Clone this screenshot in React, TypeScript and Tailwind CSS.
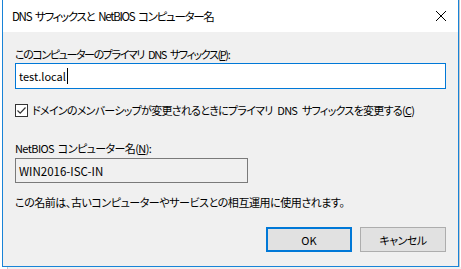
import React from 'react';

const font = "[font-family:'Noto_Sans_CJK_JP','Noto_Sans',sans-serif] [font-feature-settings:'palt']";

const App: React.FC = () => {
  return (
    <div className={`relative w-[461px] h-[269px] bg-white overflow-hidden text-[11px] text-black ${font}`}>
      {/* window behind */}
      <div className="absolute left-[459px] top-[0px] w-[2px] h-[269px] border-l border-[#c8c8c8]" />
      <div className="absolute left-[7px] top-[267px] w-[454px] h-[2px] bg-[#f0f0f0] border-l border-[#c8c8c8]" />

      <div className="relative ml-[2px] w-[457px] h-[267px] border-x border-b border-[#1883d7] bg-[#f0f0f0] flex flex-col">
        <div className="h-[32px] bg-white flex items-center justify-between pl-[9px] pr-[10px] shrink-0">
          <span className="leading-[16px] tracking-[-1.3px] [word-spacing:2.5px] text-[11.5px]">DNS サフィックスと NetBIOS コンピューター名</span>
          <svg width="12" height="12" viewBox="0 0 12 12" className="mr-[1px]">
            <path d="M1 1 L11 11 M11 1 L1 11" stroke="#000" strokeWidth="1" />
          </svg>
        </div>

        <div className="flex flex-col px-[12px]">
          <label className="mt-[14px] leading-[16px] tracking-[-1.4px] [word-spacing:3px]">
            このコンピューターのプライマリ DNS サフィックス(<span className="underline">P</span>):
          </label>
          <div className="mt-[1px] h-[26px] bg-white border border-[#0078d7] flex items-center pl-[3px]">
            <span className="leading-[16px]">test.local</span>
            <span className="ml-[1px] w-[1px] h-[16px] bg-black" />
          </div>

          <div className="mt-[13px] flex items-center h-[16px]">
            <span className="w-[13px] h-[13px] border border-[#333] bg-white flex items-center justify-center shrink-0">
              <svg width="11" height="11" viewBox="0 0 11 11">
                <path d="M1.5 5.5 L4.2 8.2 L9.5 2.5" stroke="#333" strokeWidth="1.2" fill="none" />
              </svg>
            </span>
            <span className="ml-[4px] leading-[16px] whitespace-nowrap tracking-[-0.72px] [word-spacing:3px]">
              ドメインのメンバーシップが変更されるときにプライマリ DNS サフィックスを変更する(<span className="underline">C</span>)
            </span>
          </div>

          <label className="mt-[22px] leading-[16px] tracking-[-0.6px] [word-spacing:2px]">
            NetBIOS コンピューター名(<span className="underline">N</span>):
          </label>
          <div className="mt-[2px] w-[233px] h-[25px] bg-[#f0f0f0] border border-[#7a7a7a] flex items-center pl-[3px]">
            <span className="leading-[16px] text-[11.5px]">WIN2016-ISC-IN</span>
          </div>

          <p className="mt-[11px] leading-[16px] tracking-[-0.45px]">
            この名前は、古いコンピューターやサービスとの相互運用に使用されます。
          </p>

          <div className="mt-[17px] flex justify-end gap-[8px]">
            <button className="w-[86px] h-[25px] bg-[#e1e1e1] border-2 border-[#0078d7] leading-[16px]">OK</button>
            <button className="w-[86px] h-[25px] bg-[#e1e1e1] border border-[#adadad] leading-[16px] tracking-[-0.5px]">キャンセル</button>
          </div>
        </div>
      </div>
    </div>
  );
};

export default App;
